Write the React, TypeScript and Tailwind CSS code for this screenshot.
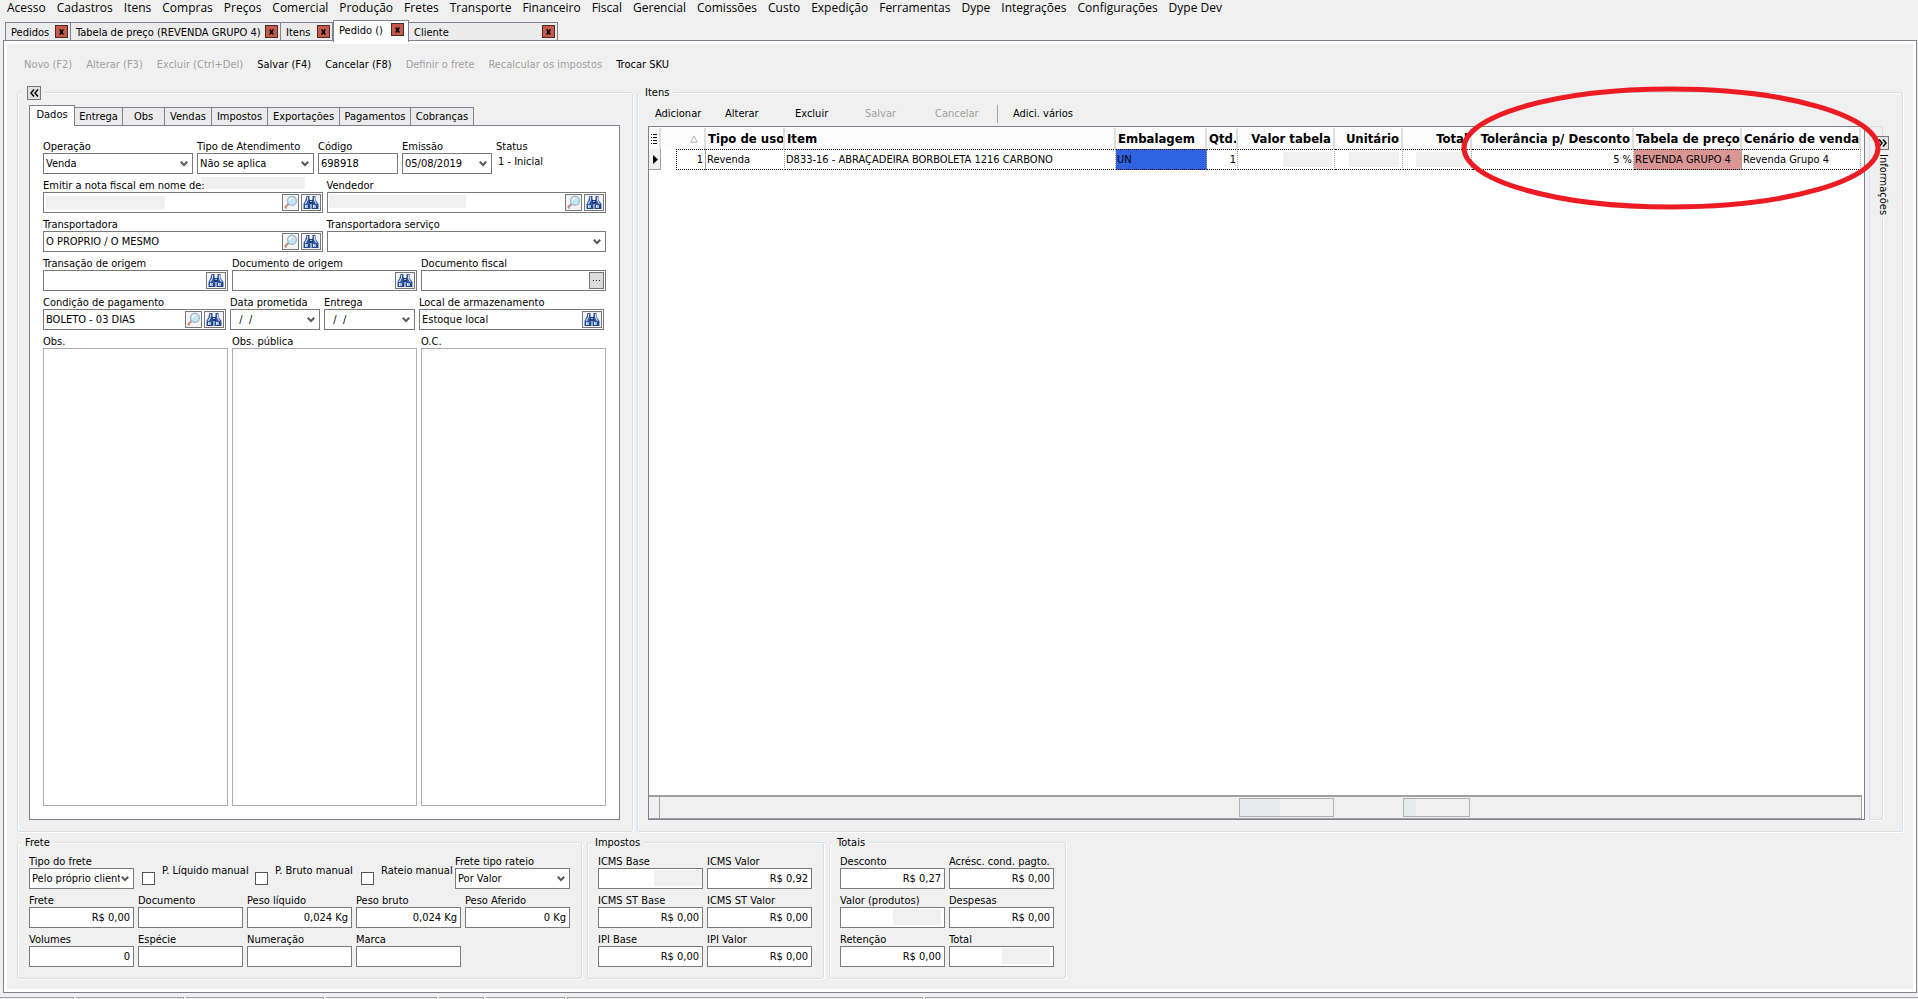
import { type ReactNode } from "react";

const menus = [
  "Acesso", "Cadastros", "Itens", "Compras", "Preços", "Comercial", "Produção", "Fretes",
  "Transporte", "Financeiro", "Fiscal", "Gerencial", "Comissões", "Custo", "Expedição",
  "Ferramentas", "Dype", "Integrações", "Configurações", "Dype Dev",
];

const documentTabs = [
  { title: "Pedidos", width: "w-[66px]" },
  { title: "Tabela de preço (REVENDA GRUPO 4)", width: "w-[210px]" },
  { title: "Itens", width: "w-[52px]" },
  { title: "Pedido ()", width: "w-[76px]", active: true },
  { title: "Cliente", width: "w-[149px]" },
];

const actions = [
  { label: "Novo (F2)", disabled: true },
  { label: "Alterar (F3)", disabled: true },
  { label: "Excluir (Ctrl+Del)", disabled: true },
  { label: "Salvar (F4)" },
  { label: "Cancelar (F8)" },
  { label: "Definir o frete", disabled: true },
  { label: "Recalcular os impostos", disabled: true },
  { label: "Trocar SKU" },
];

const orderTabs = [
  { title: "Dados", width: "w-[46px]", active: true },
  { title: "Entrega", width: "w-12" },
  { title: "Obs", width: "w-[42px]" },
  { title: "Vendas", width: "w-[47px]" },
  { title: "Impostos", width: "w-14" },
  { title: "Exportações", width: "w-[72px]" },
  { title: "Pagamentos", width: "w-[71px]" },
  { title: "Cobranças", width: "w-[63px]" },
];

const itemActions = [
  { label: "Adicionar" },
  { label: "Alterar" },
  { label: "Excluir" },
  { label: "Salvar", disabled: true },
  { label: "Cancelar", disabled: true },
];

const statusPanels = [
  "w-[74px]", "w-[108px]", "w-[138px]", "w-[111px]", "w-[45px]", "w-[79px]",
];

// empty date mask, as the date picker shows it
const emptyDate = "\u00a0\u00a0/\u00a0\u00a0/";

function BinocularsIcon() {
  return (
    <svg viewBox="0 0 18 15" className="h-[15px] w-[18px]" aria-hidden="true">
      <path d="M4.5 1h3v3l1 2v8h-7V9l2-4z" fill="#35589c" />
      <path d="M10.5 1h3v4l3 4v5h-7V6l1-2z" fill="#35589c" />
      <path d="M7 5h4v4H7z" fill="#1f3c78" />
      <path d="M8 6h2v1H8z" fill="#a8c2ea" />
      <path d="M5 2h1v3L4 9H3V8l2-3zM12 2h1v3l2 4h-1l-2-3z" fill="#c6daf6" />
      <path d="M2 10h6v4H2zM10 10h6v4h-6z" fill="#24468c" />
      <path d="M3 10h3v3H3zM11 10h3v3h-3z" fill="#9dbbe8" />
      <path d="M3 10h1v3H3zM11 10h1v3h-1z" fill="#dbe8fb" />
    </svg>
  );
}

function MagnifierIcon() {
  return (
    <svg viewBox="0 0 15 15" className="h-[15px] w-[15px]" aria-hidden="true">
      <path d="M5 9.5L2.5 12" stroke="#c79280" strokeWidth="2.4" strokeLinecap="round" />
      <path d="M2 12.5l1.4 1" stroke="#8d6a5e" strokeWidth="1" />
      <circle cx="9" cy="5.8" r="4.5" fill="#c5e6f5" stroke="#9db6c8" strokeWidth="1.2" />
      <path d="M6.3 6a3 3 0 0 1 3-3" stroke="#fff" strokeWidth="1.3" fill="none" />
    </svg>
  );
}

function Chevron() {
  return (
    <svg
      viewBox="0 0 8 7"
      className="pointer-events-none absolute right-1 top-1/2 h-[7px] w-2 -translate-y-1/2"
      aria-hidden="true"
    >
      <path d="M0.8 1.2L4 4.6 7.2 1.2" fill="none" stroke="#555" strokeWidth="2" />
    </svg>
  );
}

type IconKind = "search" | "find" | "more";

const iconStyles = {
  search: { name: "Visualizar", className: "w-[17px] bg-[#f4f4f4]" },
  find: { name: "Localizar", className: "w-5 bg-[#f4f4f4]" },
  more: { name: "Mais", className: "w-[15px] bg-[#dcdcdc]" },
};

function IconButton({ kind }: { kind: IconKind }) {
  return (
    <button
      type="button"
      aria-label={iconStyles[kind].name}
      className={`flex h-[17px] shrink-0 items-center justify-center border border-[#777] ${iconStyles[kind].className}`}
    >
      {kind === "search" && <MagnifierIcon />}
      {kind === "find" && <BinocularsIcon />}
      {kind === "more" && (
        <svg viewBox="0 0 7 1" className="h-px w-[7px]" aria-hidden="true">
          <path d="M0 0h1v1H0zM3 0h1v1H3zM6 0h1v1H6z" fill="#222" />
        </svg>
      )}
    </button>
  );
}

type FieldProps = {
  id: string;
  label: string;
  value?: string;
  className?: string;
  select?: boolean;
  right?: boolean;
  icons?: IconKind[];
  mask?: string;
};

function Field({ id, label, value = "", className = "", select, right, icons = [], mask }: FieldProps) {
  return (
    <div className={`min-w-0 ${className}`}>
      <label htmlFor={id} className="relative block h-[18px] whitespace-nowrap pt-[5px] leading-[14px]">
        {label}
      </label>
      <div className="relative flex h-[21px] items-center gap-0.5 border border-[#7a7a7a] bg-white pr-px">
        {select ? (
          <select
            id={id}
            defaultValue={value}
            className="h-full w-full appearance-none overflow-hidden bg-transparent pl-0.5 pr-3 outline-none"
          >
            <option>{value}</option>
          </select>
        ) : (
          <input
            id={id}
            defaultValue={value}
            className={`h-full w-full min-w-0 bg-transparent px-0.5 outline-none ${right ? "text-right" : ""}`}
          />
        )}
        {mask && <span className={`absolute bg-[#f0f0f0] ${mask}`} />}
        {select && <Chevron />}
        {icons.map((kind) => (
          <IconButton key={kind} kind={kind} />
        ))}
      </div>
    </div>
  );
}

function Memo({ id, label }: { id: string; label: string }) {
  return (
    <div className="flex flex-1 flex-col">
      <label htmlFor={id} className="block h-[18px] pt-[5px] leading-[14px]">
        {label}
      </label>
      <textarea id={id} className="w-full flex-1 resize-none border border-[#abadb3] bg-white outline-none" />
    </div>
  );
}

type GroupProps = { legend: ReactNode; className?: string; bodyClassName?: string; children: ReactNode };

function Group({ legend, className = "", bodyClassName = "", children }: GroupProps) {
  return (
    <fieldset
      className={`flex min-w-0 flex-col rounded-[3px] border border-[#d5dfe5] shadow-[1px_1px_0_#fff,inset_1px_1px_0_#fff] ${className}`}
    >
      <legend className="ml-[3px] flex h-[15px] items-center bg-[#f0f0f0] px-1 leading-[15px]">{legend}</legend>
      <div className={`flex flex-1 flex-col pb-[11px] ${bodyClassName}`}>{children}</div>
    </fieldset>
  );
}

function Check({ id, label, width }: { id: string; label: string; width: string }) {
  return (
    <div className={`flex shrink-0 gap-[7px] pt-[18px] ${width}`}>
      <input id={id} type="checkbox" className="mt-1 h-[13px] w-[13px] appearance-none border border-[#555] bg-white" />
      <label htmlFor={id} className="-mt-1 h-3.5 whitespace-nowrap leading-[14px]">
        {label}
      </label>
    </div>
  );
}

function ItemsTable() {
  const head = "h-[21px] overflow-hidden whitespace-nowrap border-r-2 border-[#dedede] bg-[#fcfcfc] px-0.5 text-[13px] font-bold";
  const cell = "h-[21px] overflow-hidden whitespace-nowrap border-y border-dotted border-y-black border-r border-r-[#a0a0a0] px-px";
  return (
    <table className="w-full table-fixed border-separate border-spacing-0">
      <colgroup>
        <col className="w-3" />
        <col className="w-[45px]" />
        <col className="w-[79px]" />
        <col />
        <col className="w-[91px]" />
        <col className="w-[31px]" />
        <col className="w-[97px]" />
        <col className="w-[68px]" />
        <col className="w-[69px]" />
        <col className="w-[162px]" />
        <col className="w-[108px]" />
        <col className="w-[119px]" />
      </colgroup>
      <thead>
        <tr>
          <th className={head}>
            <svg viewBox="0 0 6 10" className="h-2.5 w-1.5" aria-hidden="true">
              <path d="M0 0h1v1H0zM0 3h1v1H0zM0 6h1v1H0zM0 9h1v1H0zM2 0h4v1H2zM2 3h4v1H2zM2 6h4v1H2zM2 9h4v1H2z" fill="#111" />
            </svg>
          </th>
          <th className={head}>
            <svg viewBox="0 0 8 8" className="ml-auto mr-1 h-2 w-2" aria-label="Ordem crescente">
              <path d="M4 1L7.2 7.2H0.8z" fill="none" stroke="#aaa" strokeWidth="0.9" />
            </svg>
          </th>
          <th className={`${head} text-left`}>Tipo de uso</th>
          <th className={`${head} text-left`}>Item</th>
          <th className={`${head} text-left`}>Embalagem</th>
          <th className={`${head} text-right`}>Qtd.</th>
          <th className={`${head} text-right`}>Valor tabela</th>
          <th className={`${head} text-right`}>Unitário</th>
          <th className={`${head} text-right`}>Total</th>
          <th className={`${head} text-right`}>Tolerância p/ Desconto</th>
          <th className={`${head} text-left`}>Tabela de preço</th>
          <th className={`${head} text-left`}>Cenário de venda</th>
        </tr>
      </thead>
      <tbody>
        <tr>
          <td className="border-b border-r border-[#a0a0a0] bg-[#f0f0f0] pl-1">
            <svg viewBox="0 0 5 9" className="h-[9px] w-[5px]" aria-label="Linha atual">
              <path d="M0 0l5 4.5L0 9z" />
            </svg>
          </td>
          <td className="h-[21px] border-r border-[#a0a0a0] p-0">
            <div className="ml-[15px] h-[21px] border-y border-l border-dotted border-black pr-0.5 text-right leading-[19px]">1</div>
          </td>
          <td className={cell}>Revenda</td>
          <td className={cell}>D833-16 - ABRAÇADEIRA BORBOLETA 1216 CARBONO</td>
          <td className={`${cell} bg-[#3163e0]`}>UN</td>
          <td className={`${cell} text-right`}>1</td>
          <td className={cell}><span className="ml-auto mr-0.5 block h-[15px] w-12 bg-[#f0f0f0]" /></td>
          <td className={cell}><span className="ml-auto mr-0.5 block h-[15px] w-[50px] bg-[#f0f0f0]" /></td>
          <td className={cell}><span className="ml-auto mr-1.5 block h-[15px] w-12 bg-[#f0f0f0]" /></td>
          <td className={`${cell} text-right`}>5 %</td>
          <td className={`${cell} bg-[#d99694]`}>REVENDA GRUPO 4</td>
          <td className={cell}>Revenda Grupo 4</td>
        </tr>
      </tbody>
    </table>
  );
}

export default function App() {
  return (
    <div className="flex min-h-screen flex-col bg-[#f0f0f0] font-['DejaVu_Sans_Condensed','DejaVu_Sans',sans-serif] text-[11px] leading-[14px] text-black">
      <nav className="flex h-5 gap-[11px] pl-[7px] font-['Open_Sans',sans-serif] text-xs leading-4">
        {menus.map((menu) => (
          <button key={menu} type="button" className="h-4 whitespace-nowrap">
            {menu}
          </button>
        ))}
      </nav>

      <div className="flex h-5 items-end pl-[5px]">
        {documentTabs.map((tab) => (
          <div
            key={tab.title}
            className={`flex shrink-0 justify-between border border-b-0 border-[#82808f] pl-[5px] ${tab.width} ${
              tab.active
                ? "relative z-10 -mb-0.5 h-[22px] bg-white pb-1 pr-1 pt-0.5"
                : "h-[18px] border-l-0 bg-[#ebebeb] pr-0.5 pt-0.5 first:border-l"
            }`}
          >
            <button type="button" className="whitespace-nowrap">
              {tab.title}
            </button>
            <button
              type="button"
              aria-label={`Fechar ${tab.title}`}
              className="flex h-[13px] w-[13px] items-center justify-center border border-[#4b2a26] bg-[#c4594c]"
            >
              <svg viewBox="0 0 5 6" className="h-1.5 w-[5px]" aria-hidden="true">
                <path d="M0.7 0.5l3.6 5M4.3 0.5l-3.6 5" stroke="#000" strokeWidth="1.5" />
              </svg>
            </button>
          </div>
        ))}
      </div>

      <main className="mb-1 ml-[3px] mr-px flex flex-1 flex-col border border-[#82808f] bg-white p-[3px]">
        <div className="flex flex-1 flex-col bg-[#f0f0f0] px-2.5 pb-2.5">
          <div className="flex h-[41px] items-center gap-3.5 pl-[7px]">
            {actions.map((action) => (
              <button
                key={action.label}
                type="button"
                disabled={action.disabled}
                className="whitespace-nowrap disabled:text-[#a0a0a0]"
              >
                {action.label}
              </button>
            ))}
          </div>

          <div className="flex flex-1 gap-1">
            <Group
              className="w-[616px] shrink-0"
              bodyClassName="pl-[11px] pr-3"
              legend={
                <button
                  type="button"
                  aria-label="Recolher"
                  className="ml-0.5 flex h-3.5 w-3.5 items-center justify-center border border-[#777] bg-[#e1e1e1]"
                >
                  <svg viewBox="0 0 9 8" className="h-2 w-[9px]" aria-hidden="true">
                    <path d="M4 0.5L1 4l3 3.5M8 0.5L5 4l3 3.5" fill="none" stroke="#000" strokeWidth="1.5" />
                  </svg>
                </button>
              }
            >
              <div className="mt-[5px] flex h-5 items-end">
                {orderTabs.map((tab) => (
                  <button
                    key={tab.title}
                    type="button"
                    className={`shrink-0 whitespace-nowrap border border-b-0 border-[#82808f] ${tab.width} ${
                      tab.active ? "relative z-10 -mb-px h-[21px] bg-white pb-0.5" : "h-[18px] border-l-0 bg-[#ebebeb] pt-px"
                    }`}
                  >
                    {tab.title}
                  </button>
                ))}
              </div>
              <div className="flex flex-1 flex-col border border-[#82808f] bg-white px-[13px] pb-[13px] pt-[9px]">
                <div className="flex gap-1">
                  <Field id="operacao" label="Operação" value="Venda" select className="w-[150px]" />
                  <Field id="atendimento" label="Tipo de Atendimento" value="Não se aplica" select className="w-[117px]" />
                  <Field id="codigo" label="Código" value="698918" className="w-20" />
                  <Field id="emissao" label="Emissão" value="05/08/2019" select className="w-[90px]" />
                  <div>
                    <div className="h-[18px] pt-[5px]">Status</div>
                    <div className="pl-0.5 pt-0.5">1 - Inicial</div>
                  </div>
                </div>
                <div className="relative flex gap-1">
                  <span className="absolute left-[158px] top-[3px] h-3 w-[104px] bg-[#f0f0f0]" />
                  <Field
                    id="emitir"
                    label="Emitir a nota fiscal em nome de:"
                    icons={["search", "find"]}
                    className="flex-1"
                    mask="left-0.5 top-[3px] h-[13px] w-[119px]"
                  />
                  <Field
                    id="vendedor"
                    label="Vendedor"
                    icons={["search", "find"]}
                    className="flex-1"
                    mask="left-px top-0.5 h-[13px] w-[137px]"
                  />
                </div>
                <div className="flex gap-1">
                  <Field id="transportadora" label="Transportadora" value="O PROPRIO / O MESMO" icons={["search", "find"]} className="flex-1" />
                  <Field id="servico" label="Transportadora serviço" select className="flex-1" />
                </div>
                <div className="flex gap-1">
                  <Field id="transacao" label="Transação de origem" icons={["find"]} className="flex-1" />
                  <Field id="documento-origem" label="Documento de origem" icons={["find"]} className="flex-1" />
                  <Field id="documento-fiscal" label="Documento fiscal" icons={["more"]} className="flex-1" />
                </div>
                <div className="flex gap-1 pr-0.5">
                  <Field id="condicao" label="Condição de pagamento" value="BOLETO - 03 DIAS" icons={["search", "find"]} className="w-[183px]" />
                  <Field id="prometida" label="Data prometida" value={emptyDate} select className="w-[90px]" />
                  <Field id="entrega" label="Entrega" value={emptyDate} select className="w-[91px]" />
                  <Field id="armazenamento" label="Local de armazenamento" value="Estoque local" icons={["find"]} className="flex-1" />
                </div>
                <div className="flex flex-1 gap-1">
                  <Memo id="obs" label="Obs." />
                  <Memo id="obs-publica" label="Obs. pública" />
                  <Memo id="oc" label="O.C." />
                </div>
              </div>
            </Group>

            <Group className="flex-1" bodyClassName="pl-2.5 pr-[13px]" legend="Itens">
              <div className="flex h-[26px] items-center pl-[7px] pt-0.5">
                {itemActions.map((action) => (
                  <button
                    key={action.label}
                    type="button"
                    disabled={action.disabled}
                    className="w-[70px] whitespace-nowrap text-left disabled:text-[#a0a0a0]"
                  >
                    {action.label}
                  </button>
                ))}
                <div className="-ml-2 mr-[15px] h-[18px] w-px bg-[#a0a0a0]" />
                <button type="button" className="whitespace-nowrap">
                  Adici. vários
                </button>
              </div>

              <div className="flex flex-1">
                <div className="relative flex flex-1 flex-col border border-[#82808f] bg-white pr-0.5">
                  <div className="flex-1 pr-px pt-px">
                    <ItemsTable />
                  </div>
                  <div className="flex h-6 border-b border-r border-t-2 border-[#a0a0a0] bg-[#f0f0f0]">
                    <div className="w-[11px] border-r border-[#a0a0a0]" />
                    <div className="flex flex-1 justify-end gap-[69px] pr-[391px] pt-px">
                      <div className="h-[19px] w-[95px] border border-[#b0b0b0] bg-[#f0f0f0]">
                        <div className="h-full w-10 bg-[#e6eaea]" />
                      </div>
                      <div className="h-[19px] w-[67px] border border-[#b0b0b0] bg-[#f0f0f0]">
                        <div className="h-full w-3 bg-[#e6eaea]" />
                      </div>
                    </div>
                  </div>
                  <svg viewBox="0 0 421 124" className="pointer-events-none absolute -right-[18px] -top-[41px] h-[124px] w-[421px] overflow-visible" aria-hidden="true">
                    <ellipse cx="210" cy="62" rx="207" ry="59" fill="none" stroke="#ed1c24" strokeWidth="5" />
                  </svg>
                </div>
                {/* collapsed info panel */}
                <div className="ml-1 flex w-5 flex-col">
                  <div className="h-2.5 w-3.5 rounded-t-[3px] border border-b-0 border-[#d5dfe5]" />
                  <div className="flex h-[82px] w-3.5 flex-col items-start border-l border-[#d5dfe5] pl-1.5">
                    <button
                      type="button"
                      aria-label="Expandir"
                      className="flex h-3.5 w-[13px] shrink-0 items-center justify-center border border-[#777] bg-[#e1e1e1]"
                    >
                      <svg viewBox="0 0 9 8" className="h-2 w-[9px]" aria-hidden="true">
                        <path d="M1 0.5L4 4 1 7.5M5 0.5L8 4 5 7.5" fill="none" stroke="#000" strokeWidth="1.5" />
                      </svg>
                    </button>
                    <span className="mt-1 w-3.5 [writing-mode:vertical-rl]">Informações</span>
                  </div>
                  <div className="w-3.5 flex-1 rounded-b-[3px] border border-t-0 border-[#d5dfe5] shadow-[1px_1px_0_#fff]" />
                </div>
              </div>
            </Group>
          </div>

          <div className="mt-[3px] flex gap-[5px]">
            <Group className="w-[565px]" bodyClassName="px-[11px]" legend="Frete">
              <div className="flex">
                <Field id="tipo-frete" label="Tipo do frete" value="Pelo próprio cliente" select className="mr-2 w-[105px] shrink-0" />
                <Check id="liquido-manual" label="P. Líquido manual" width="w-[113px]" />
                <Check id="bruto-manual" label="P. Bruto manual" width="w-[106px]" />
                <Check id="rateio-manual" label="Rateio manual" width="w-[94px]" />
                <Field id="rateio" label="Frete tipo rateio" value="Por Valor" select className="flex-1" />
              </div>
              <div className="grid grid-cols-5 gap-x-1">
                <Field id="frete" label="Frete" value="R$ 0,00" right />
                <Field id="documento" label="Documento" />
                <Field id="peso-liquido" label="Peso líquido" value="0,024 Kg" right />
                <Field id="peso-bruto" label="Peso bruto" value="0,024 Kg" right />
                <Field id="peso-aferido" label="Peso Aferido" value="0 Kg" right />
                <Field id="volumes" label="Volumes" value="0" right />
                <Field id="especie" label="Espécie" />
                <Field id="numeracao" label="Numeração" />
                <Field id="marca" label="Marca" />
              </div>
            </Group>

            <Group className="w-[237px]" bodyClassName="pl-2.5 pr-[11px]" legend="Impostos">
              <div className="grid grid-cols-2 gap-x-1">
                <Field id="icms-base" label="ICMS Base" right mask="right-0 top-px h-4 w-12" />
                <Field id="icms-valor" label="ICMS Valor" value="R$ 0,92" right />
                <Field id="icms-st-base" label="ICMS ST Base" value="R$ 0,00" right />
                <Field id="icms-st-valor" label="ICMS ST Valor" value="R$ 0,00" right />
                <Field id="ipi-base" label="IPI Base" value="R$ 0,00" right />
                <Field id="ipi-valor" label="IPI Valor" value="R$ 0,00" right />
              </div>
            </Group>

            <Group className="w-[237px]" bodyClassName="pl-2.5 pr-[11px]" legend="Totais">
              <div className="grid grid-cols-2 gap-x-1">
                <Field id="desconto" label="Desconto" value="R$ 0,27" right />
                <Field id="acrescimo" label="Acrésc. cond. pagto." value="R$ 0,00" right />
                <Field id="valor-produtos" label="Valor (produtos)" right mask="right-[3px] top-px h-4 w-12" />
                <Field id="despesas" label="Despesas" value="R$ 0,00" right />
                <Field id="retencao" label="Retenção" value="R$ 0,00" right />
                <Field id="total" label="Total" right mask="right-[3px] top-px h-4 w-12" />
              </div>
            </Group>
          </div>
        </div>
      </main>

      <footer className="flex h-0.5 gap-0.5 overflow-hidden">
        {statusPanels.map((width, i) => (
          <div key={i} className={`border-t border-r border-[#a0a0a0] ${width}`} />
        ))}
        <div className="w-[356px] border-x border-t border-x-[#5fce5f] border-t-[#a0a0a0]" />
        <div className="flex-1 border-l border-t border-[#a0a0a0]" />
      </footer>
    </div>
  );
}
